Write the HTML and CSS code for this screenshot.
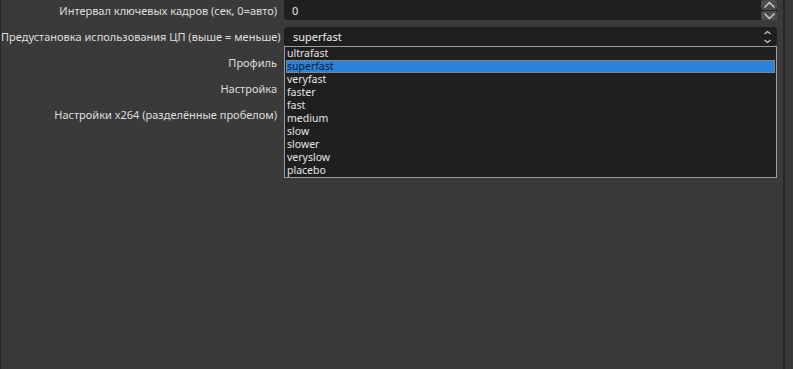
FILE: index.html
```html
<!DOCTYPE html>
<html lang="ru">
<head>
  <meta charset="UTF-8" />
  <title>Кодировщик x264</title>
  <link rel="stylesheet" href="styles.css">
</head>
<body>
  <div class="panel">
    <div class="form">
      <div class="row">
        <label>Интервал ключевых кадров (сек, 0=авто)</label>
        <div class="spinbox">
          <span class="value">0</span>
          <div class="spin-buttons">
            <div class="spin-btn">
              <svg width="13" height="8" viewBox="0 0 13 8"><path d="M1.5 6.5 L6.5 1.5 L11.5 6.5" fill="none" stroke="#d0d0d0" stroke-width="1.4"/></svg>
            </div>
            <div class="spin-btn">
              <svg width="13" height="8" viewBox="0 0 13 8"><path d="M1.5 1.5 L6.5 6.5 L11.5 1.5" fill="none" stroke="#d0d0d0" stroke-width="1.4"/></svg>
            </div>
          </div>
        </div>
      </div>

      <div class="row">
        <label>Предустановка использования ЦП (выше = меньше)</label>
        <div class="combo">
          <span class="value">superfast</span>
          <svg class="chevrons" width="9" height="14" viewBox="0 0 9 14">
            <path d="M1.5 4 L4.5 1.5 L7.5 4" fill="none" stroke="#cfcfcf" stroke-width="1.1"/>
            <path d="M1.5 10 L4.5 12.5 L7.5 10" fill="none" stroke="#cfcfcf" stroke-width="1.1"/>
          </svg>

          <ul class="dropdown">
            <li>ultrafast</li>
            <li class="selected">superfast</li>
            <li>veryfast</li>
            <li>faster</li>
            <li>fast</li>
            <li>medium</li>
            <li>slow</li>
            <li>slower</li>
            <li>veryslow</li>
            <li>placebo</li>
          </ul>
        </div>
      </div>

      <div class="row">
        <label>Профиль</label>
        <div class="empty"></div>
      </div>

      <div class="row">
        <label>Настройка</label>
        <div class="empty"></div>
      </div>

      <div class="row">
        <label>Настройки x264 (разделённые пробелом)</label>
        <div class="empty"></div>
      </div>
    </div>
  </div>
  <div class="side"></div>
</body>
</html>
```

FILE: styles.css
```css
body {
  margin: 0;
  height: 369px;
  display: flex;
  background: #3a3a3a;
  font-family: 'Noto Sans', 'Open Sans', sans-serif;
  font-size: 11px;
  color: #dedede;
  overflow: hidden;
}

.panel {
  width: 785px;
  border-left: 1px solid #262626;
  border-right: 2px solid #262626;
  box-sizing: border-box;
  height: 100%;
}

.side {
  flex: 1;
}

.form {
  display: flex;
  flex-direction: column;
  gap: 6px;
}

.row {
  display: grid;
  grid-template-columns: 276px 493px;
  column-gap: 7px;
  height: 20px;
  align-items: center;
}

.row label {
  text-align: right;
  white-space: nowrap;
}

.spinbox {
  position: relative;
  height: 20px;
  background: #1f1f1f;
  border-radius: 0 0 4px 4px;
  display: flex;
  align-items: center;
  padding-left: 8px;
  color: #e8e8e8;
}

.spin-buttons {
  position: absolute;
  right: 0;
  top: 0;
  display: flex;
  flex-direction: column;
  gap: 1px;
}

.spin-btn {
  width: 16px;
  height: 9px;
  background: #4c4c4c;
  border-radius: 2px;
  display: flex;
  align-items: center;
  justify-content: center;
}

.spin-btn:first-child {
  height: 10px;
}

.combo {
  position: relative;
  height: 19px;
  background: #1f1f1f;
  border-radius: 4px;
  display: flex;
  align-items: center;
  padding-left: 9px;
  color: #ececec;
}

.chevrons {
  position: absolute;
  right: 5px;
  top: 3px;
}

.dropdown {
  position: absolute;
  left: 0;
  top: 19px;
  width: 493px;
  box-sizing: border-box;
  margin: 0;
  padding: 0;
  list-style: none;
  background: #1f1f1f;
  border: 1px solid #9c9ca6;
  z-index: 2;
  font-size: 10.5px;
}

.dropdown li {
  height: 13px;
  line-height: 13px;
  padding-left: 2px;
  color: #e4e4e4;
  box-sizing: border-box;
}

.dropdown li.selected {
  background: #2b82da;
  color: #0c1a2c;
  outline: 1px dotted #d88a2a;
  outline-offset: -1px;
  margin: 0 1px;
  padding-left: 1px;
}

.empty {
  height: 20px;
}
```
